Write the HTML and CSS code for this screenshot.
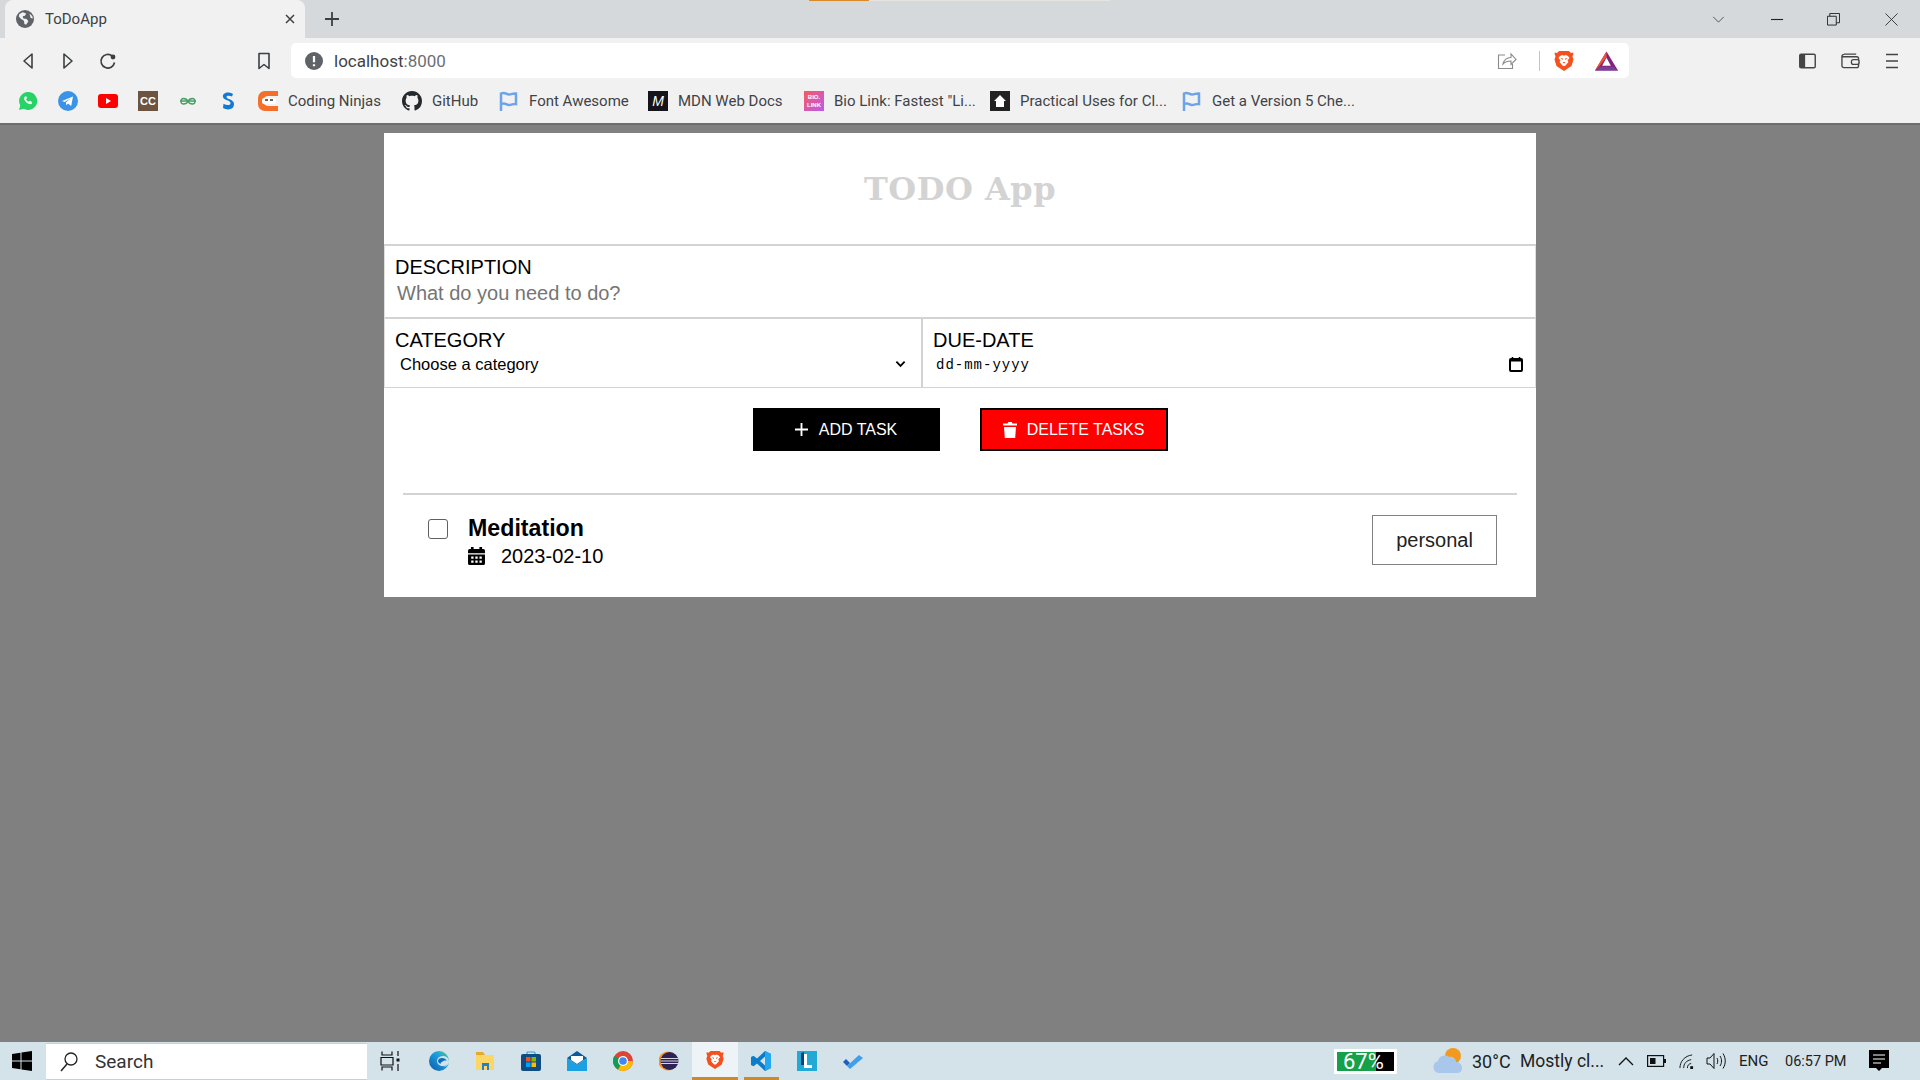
FILE: index.html
```html
<!DOCTYPE html>
<html lang="en">
<head>
<meta charset="utf-8">
<title>ToDoApp</title>
<link rel="stylesheet" href="styles.css">
</head>
<body>
<div class="window">
  <header class="browser">
    <div class="tabstrip">
      <div class="loadbar"><span class="loadbar-done"></span><span class="loadbar-rest"></span></div>
      <div class="tab">
        <svg class="i17" viewBox="0 0 16 16"><circle cx="8" cy="8" r="8" fill="#5f6368"/><path d="M3 3.500l3-1.500 3 1-1 2-2 .5.5 2 3 .5 1.500 2-2 3-1.500-.500-.5-3-3-2-1.500-2zM12 3l2.500 2.500.5 2-2-.5z" fill="#f1f1f1"/></svg>
        <span class="tab-title">ToDoApp</span>
        <svg class="tab-close" viewBox="0 0 10 10"><path d="M1 1l8 8M9 1l-8 8" stroke="#3c4043" stroke-width="1.500" fill="none"/></svg>
      </div>
      <svg class="newtab" viewBox="0 0 14 14"><path d="M7 0v14M0 7h14" stroke="#3c4043" stroke-width="1.800" fill="none"/></svg>
      <div class="winctl">
        <svg class="winctl-down" viewBox="0 0 14 8"><path d="M1 1l6 6 6-6" stroke="#444" stroke-width="1" fill="none"/></svg>
        <svg class="winctl-min" viewBox="0 0 14 14"><path d="M0 7h13" stroke="#222" stroke-width="1.200"/></svg>
        <svg class="winctl-max" viewBox="0 0 14 14"><path d="M.5 3.500h9.500v9.500h-9.500zM3 3.500v-3h10.500v10h-3.500" stroke="#222" stroke-width="1" fill="none"/></svg>
        <svg class="winctl-close" viewBox="0 0 14 14"><path d="M.5 .5l13 13M13.500 .5l-13 13" stroke="#333" stroke-width="1" fill="none"/></svg>
      </div>
    </div>

    <div class="toolbar">
      <svg class="nav" viewBox="0 0 14 18"><path d="M11 2L3 9l8 7z" stroke="#3c4043" stroke-width="1.600" fill="none" stroke-linejoin="round"/></svg>
      <svg class="nav" viewBox="0 0 14 18"><path d="M3 2l8 7-8 7z" stroke="#3c4043" stroke-width="1.600" fill="none" stroke-linejoin="round"/></svg>
      <svg class="nav nav-reload" viewBox="0 0 18 18"><path d="M15.500 10.500a6.800 6.800 0 1 1-2.300-6.500" stroke="#3c4043" stroke-width="1.700" fill="none"/><circle cx="14" cy="5" r="2.400" fill="#3c4043"/></svg>
      <svg class="nav nav-bookmark" viewBox="0 0 14 18"><path d="M2 1.500h10v15l-5-4-5 4z" stroke="#3c4043" stroke-width="1.600" fill="none" stroke-linejoin="round"/></svg>
      <div class="omnibox">
        <svg class="i17" viewBox="0 0 16 16"><circle cx="8" cy="8" r="8" fill="#5f6368"/><path d="M8 3.500v5.500M8 10.800v1.800" stroke="#fff" stroke-width="2"/></svg>
        <span class="url"><span class="url-host">localhost</span>:8000</span>
        <svg class="share" viewBox="0 0 20 18"><path d="M8 3H1.500v13.500h14V12M6 12c1-4 4-6.500 8-6.500V2l5 5.500-5 5V9c-3 0-6 1-8 3z" stroke="#8a8a8a" stroke-width="1.100" fill="none"/></svg>
        <span class="omni-sep"></span>
        <svg class="brave" viewBox="0 0 20 22"><path d="M5 1h10l2 2 2-.5.5 1-1 3 1 3-2 6.500-7.500 5-7.500-5-2-6.500 1-3-1-3 .5-1 2 .5z" fill="#f4511e"/><path d="M6 6l2.500-1 1.500.8 1.500-.8L14 6l1.500 2-2 2.500 1 1.500-3 3.500-1.500.8-1.500-.8-3-3.500 1-1.500-2-2.500z" fill="#fff"/><path d="M6.500 8l2.500.5-.5 1.500zM13.500 8l-2.500.5.5 1.500zM8.500 12h3L10 13.500z" fill="#f4511e"/></svg>
        <svg class="bat" viewBox="0 0 24 20"><path d="M12 0L0 20h24z" fill="#80247b"/><path d="M12 0L0 20l5-5 7-9z" fill="#f4512c"/><path d="M0 20h24l-5-4H5z" fill="#7a3f98"/><path d="M12 6.500L7.500 15h9z" fill="#fff"/></svg>
      </div>
      <svg class="tool tool-side" viewBox="0 0 18 16"><rect x=".8" y=".8" width="16.400" height="14.400" rx="1.500" fill="none" stroke="#444" stroke-width="1.500"/><rect x="1" y="1" width="5.500" height="14" fill="#444"/></svg>
      <svg class="tool tool-wallet" viewBox="0 0 20 16"><path d="M3 .8h13M1 3.500h15.500a2 2 0 0 1 2 2v7.500a2 2 0 0 1-2 2H3a2 2 0 0 1-2-2V3a2 2 0 0 1 2-2" stroke="#444" stroke-width="1.400" fill="none"/><rect x="11" y="6.500" width="8" height="5" rx="2" fill="#f1f1f1" stroke="#444" stroke-width="1.400"/></svg>
      <svg class="tool tool-menu" viewBox="0 0 13 16"><path d="M0 1h13M0 8h13M0 15h13" stroke="#444" stroke-width="1.700"/></svg>
    </div>

    <nav class="bookmarks">
      <svg class="bm" viewBox="0 0 20 20"><path d="M10 1a9 9 0 0 0-7.700 13.500L1 19l4.700-1.200A9 9 0 1 0 10 1z" fill="#25d366"/><path d="M7 5.500c-1.500 1-1 3.500 1 5.500s4.500 3 6 1.500l-.5-2-2-.8-1 1c-1-.5-2-1.500-2.500-2.500l1-1-.7-2z" fill="#fff"/></svg>
      <svg class="bm" viewBox="0 0 20 20"><circle cx="10" cy="10" r="10" fill="#3b93e8"/><path d="M4 10l11-4.500-1.800 9.500-3.200-2.400-1.700 1.700-.4-2.900 4.800-4-6 3.500z" fill="#fff"/></svg>
      <svg class="bm" viewBox="0 0 20 20"><rect y="3" width="20" height="14" rx="3" fill="#f00"/><path d="M8 7l5 3-5 3z" fill="#fff"/></svg>
      <span class="bm bm-cc">CC</span>
      <svg class="bm" viewBox="0 0 20 20"><path d="M2 10h16M10 10.500C9 8 7 7.500 5.500 7.500S3 8.800 3 10.500 4 13 5.500 13 9 12.500 10 10.500zm0 0c1-2.500 3-3 4.500-3S17 8.800 17 10.500 16 13 14.500 13 11 12.500 10 10.500z" stroke="#4a9d64" stroke-width="1.300" fill="none"/></svg>
      <svg class="bm" viewBox="0 0 20 20"><path d="M15 3C11 0 4 1.500 5 6c.7 3.500 8 3 7.500 6.500-.4 2-4 2-7 .3L5 17c4 2.500 11 2 11-4 0-5-7.500-4.500-7.500-7 0-1.500 3-1.500 5.500-.5z" fill="#1379d6"/></svg>
      <a class="bm-item"><svg class="bm" viewBox="0 0 20 20"><path d="M7 0h13v5h-10a5 5 0 0 0 0 10h10v5H7A7 7 0 0 1 0 13V7a7 7 0 0 1 7-7z" fill="#f4702a"/><rect x="4" y="7" width="14" height="6" rx="2" fill="#fff"/><path d="M7 9h3M12 9h3" stroke="#333" stroke-width="1.500"/></svg><span class="bm-text bm-w-cn">Coding Ninjas</span></a>
      <a class="bm-item"><svg class="bm" viewBox="0 0 16 16"><path fill="#24292e" d="M8 0C3.580 0 0 3.580 0 8c0 3.540 2.290 6.530 5.470 7.590.4.070.55-.17.55-.38 0-.19-.01-.82-.01-1.490-2.010.37-2.530-.49-2.690-.94-.09-.23-.48-.94-.82-1.130-.28-.15-.68-.52-.01-.53.63-.01 1.080.58 1.230.82.72 1.210 1.870.87 2.330.66.07-.52.28-.87.51-1.070-1.780-.2-3.640-.89-3.640-3.950 0-.87.31-1.590.82-2.150-.08-.2-.36-1.020.08-2.120 0 0 .67-.21 2.200.82.64-.18 1.320-.27 2-.27.68 0 1.360.09 2 .27 1.530-1.040 2.200-.82 2.200-.82.44 1.100.16 1.920.08 2.120.51.56.82 1.270.82 2.150 0 3.070-1.870 3.750-3.650 3.950.29.25.54.73.54 1.480 0 1.070-.01 1.930-.01 2.200 0 .21.15.46.55.38A8.013 8.013 0 0 0 16 8c0-4.420-3.580-8-8-8z"/></svg><span class="bm-text bm-w-gh">GitHub</span></a>
      <a class="bm-item"><svg class="bm" viewBox="0 0 20 20"><path d="M2 20V2.500c4-2 5 1 8 1s4-1.500 7-1V13c-3-.5-4 1-7 1s-4-3-7-1" stroke="#6da3e8" stroke-width="2.500" fill="none"/></svg><span class="bm-text bm-w-fa">Font Awesome</span></a>
      <a class="bm-item"><span class="bm bm-mdn">M</span><span class="bm-text bm-w-mdn">MDN Web Docs</span></a>
      <a class="bm-item"><span class="bm bm-bio">BIO.<br>LINK</span><span class="bm-text bm-w-bio">Bio Link: Fastest "Li...</span></a>
      <a class="bm-item"><svg class="bm" viewBox="0 0 20 20"><rect width="20" height="20" fill="#222"/><path d="M10 4l6 6h-2v6H6v-6H4z" fill="#fff"/></svg><span class="bm-text bm-w-pu">Practical Uses for Cl...</span></a>
      <a class="bm-item"><svg class="bm" viewBox="0 0 20 20"><path d="M2 20V2.500c4-2 5 1 8 1s4-1.500 7-1V13c-3-.5-4 1-7 1s-4-3-7-1" stroke="#6da3e8" stroke-width="2.500" fill="none"/></svg><span class="bm-text">Get a Version 5 Che...</span></a>
    </nav>
  </header>

  <main class="page">
    <section class="card">
      <h1 class="app-title">TODO App</h1>
      <div class="field field-full">
        <label class="field-label" for="desc">DESCRIPTION</label>
        <input class="desc-input" id="desc" type="text" placeholder="What do you need to do?">
      </div>
      <div class="field-row">
        <div class="field field-cat">
          <label class="field-label" for="cat">CATEGORY</label>
          <div class="select-wrap">
            <select class="cat-select" id="cat"><option>Choose a category</option></select>
            <svg class="chevron" viewBox="0 0 12 8"><path d="M1.500 1.500L6 6l4.500-4.500" stroke="#000" stroke-width="2" fill="none"/></svg>
          </div>
        </div>
        <div class="field field-date">
          <span class="field-label">DUE-DATE</span>
          <div class="date-wrap">
            <span class="date-text">dd-mm-yyyy</span>
            <svg class="date-icon" viewBox="0 0 14 15"><path d="M3.500 0v2M10.500 0v2" stroke="#000" stroke-width="1.500"/><rect x="1" y="2" width="12" height="12" rx="1" fill="none" stroke="#000" stroke-width="2"/><rect x="1" y="2" width="12" height="2.500" fill="#000"/></svg>
          </div>
        </div>
      </div>
      <div class="actions">
        <button class="btn btn-add" type="button"><svg class="btn-plus" viewBox="0 0 14 14"><path d="M7 0v14M0 7h14" stroke="#fff" stroke-width="2"/></svg>ADD TASK</button>
        <button class="btn btn-del" type="button"><svg class="btn-trash" viewBox="0 0 14 16"><path d="M4.500 1.500L5.300 0h3.400l.8 1.500H14v2H0v-2zM1 5h12l-.8 11H1.800z" fill="#fff"/></svg>DELETE TASKS</button>
      </div>
      <hr class="rule">
      <div class="task">
        <input class="task-check" type="checkbox">
        <div class="task-body">
          <div class="task-name">Meditation</div>
          <div class="task-date">
            <svg class="task-cal" viewBox="0 0 16 17"><path d="M4 0v3M12 0v3" stroke="#000" stroke-width="2.500"/><path d="M0 3.500a1.500 1.500 0 0 1 1.500-1.500h13a1.500 1.500 0 0 1 1.500 1.500V6H0zM0 7h16v8.500a1.500 1.500 0 0 1-1.500 1.500h-13A1.500 1.500 0 0 1 0 15.500z" fill="#000"/><path d="M3 9h2.200v2H3zM6.900 9h2.200v2H6.900zM10.800 9H13v2h-2.200zM3 12.800h2.200v2H3zM6.900 12.800h2.200v2H6.900zM10.800 12.800H13v2h-2.200z" fill="#fff"/></svg>
            <span>2023-02-10</span>
          </div>
        </div>
        <span class="task-tag">personal</span>
      </div>
    </section>
  </main>

  <footer class="taskbar">
    <div class="start"><svg class="start-logo" viewBox="0 0 20 20"><path d="M0 3l8.500-1.300V9.500H0zM9.500 1.500L20 0v9.500H9.500zM0 10.500h8.500v7.800L0 17zM9.500 10.500H20V20L9.500 18.500z" fill="#000"/></svg></div>
    <div class="search">
      <svg class="search-icon" viewBox="0 0 18 20"><circle cx="11" cy="7" r="6" fill="none" stroke="#222" stroke-width="1.300"/><path d="M7 12l-6 7" stroke="#222" stroke-width="1.500"/></svg>
      <span class="search-text">Search</span>
    </div>
    <div class="slot slot-view"><svg class="slot-icon" viewBox="0 0 20 20"><path d="M2 .5v3.500h10V.5M1 6.500h12v7.500H1zM2 19.500V16h10v3.500M18 0v5M18 13v7" stroke="#111" stroke-width="1.200" fill="none"/><rect x="16.500" y="7.500" width="3" height="3" fill="#111"/></svg></div>
    <div class="slot"><svg class="slot-icon" viewBox="0 0 20 20"><defs><linearGradient id="edge" x1="0" y1="1" x2="1" y2="0"><stop offset="0" stop-color="#0c59a4"/><stop offset=".6" stop-color="#1b9de2"/><stop offset="1" stop-color="#4fd27a"/></linearGradient></defs><circle cx="10" cy="10" r="10" fill="url(#edge)"/><path d="M20 11c0-4-3-6-6-6-4 0-6 3-6 5 0 3 3 5 6 5 1 0 3-.5 4-1.500-.5 1-3 3-5 2.500 3 .5 7-2 7-5z" fill="#d3e2ea"/><path d="M9 10c0-2 2-3 4-3 2.500 0 4 1 5 3-2-1-4 0-5 1-1 0-2 1-1 2-1.500-.5-3-1.500-3-3z" fill="#0f6cbd"/></svg></div>
    <div class="slot"><svg class="slot-icon" viewBox="0 0 20 20"><path d="M1 1h7l2 3H1z" fill="#e5a92d"/><path d="M1 4h18v15H1z" fill="#fcd768"/><path d="M7 19v-7h7v7h-2v-4H9v4z" fill="#2280c9"/></svg></div>
    <div class="slot"><svg class="slot-icon" viewBox="0 0 20 20"><path d="M6 5V2a1 1 0 0 1 1-1h6a1 1 0 0 1 1 1v3" stroke="#2a9fd6" stroke-width="1.200" fill="none"/><rect y="3" width="20" height="17" rx="2" fill="#0f4c81"/><rect x="5" y="6" width="4.500" height="4.500" fill="#f25022"/><rect x="10.500" y="6" width="4.500" height="4.500" fill="#7fba00"/><rect x="5" y="11.500" width="4.500" height="4.500" fill="#00a4ef"/><rect x="10.500" y="11.500" width="4.500" height="4.500" fill="#ffb900"/></svg></div>
    <div class="slot"><svg class="slot-icon" viewBox="0 0 20 20"><path d="M0 7l10-7 10 7-10 7z" fill="#0a5a9c"/><path d="M0 7v13h20V7l-10 7z" fill="#1ba1e2"/><path d="M4 5h12v4l-6 4-6-4z" fill="#fff"/></svg></div>
    <div class="slot"><svg class="slot-icon" viewBox="0 0 20 20"><circle cx="10" cy="10" r="10" fill="#db4437"/><path d="M10 10L1.300 5A10 10 0 0 0 5 18.700l5-8.700z" fill="#0f9d58"/><path d="M10 10l-5 8.700A10 10 0 0 0 19.900 10z" fill="#fbbc05"/><circle cx="10" cy="10" r="5" fill="#fff"/><circle cx="10" cy="10" r="3.800" fill="#4285f4"/></svg></div>
    <div class="slot"><svg class="slot-icon" viewBox="0 0 20 20"><circle cx="9" cy="10" r="9.500" fill="#f7941e"/><circle cx="10.500" cy="10" r="9" fill="#2c2255"/><path d="M2 7.500h17M1.500 10h18M2 12.500h17" stroke="#d5d5e0" stroke-width="1.200"/></svg></div>
    <div class="slot slot-active"><svg class="slot-icon" viewBox="0 0 20 22"><path d="M5 1h10l2 2 2-.5.5 1-1 3 1 3-2 6.500-7.500 5-7.500-5-2-6.500 1-3-1-3 .5-1 2 .5z" fill="#f4511e"/><path d="M6 6l2.500-1 1.500.8 1.500-.8L14 6l1.500 2-2 2.500 1 1.500-3 3.500-1.500.8-1.500-.8-3-3.500 1-1.500-2-2.500z" fill="#fff"/><path d="M6.500 8l2.500.5-.5 1.500zM13.500 8l-2.500.5.5 1.500zM8.500 12h3L10 13.500z" fill="#f4511e"/></svg></div>
    <div class="slot slot-open"><svg class="slot-icon" viewBox="0 0 20 20"><path d="M14 0l6 3v14l-6 3-8-7.500-3.500 2.800L0 14V6l2.500-1.300L6 7.500zM14 5.500L9 10l5 4.500z" fill="#0a7cc9"/><path d="M14 0l6 3v14l-6 3z" fill="#22a7f0"/></svg></div>
    <div class="slot"><svg class="slot-icon" viewBox="0 0 20 20"><rect width="20" height="20" fill="#22a9d6"/><path d="M4 2l3-1v13h-3z" fill="#0c3f7a"/><path d="M7 3h3v11h5v3H7z" fill="#fff"/></svg></div>
    <div class="slot"><svg class="slot-icon" viewBox="0 0 20 20"><path d="M0 11l3-3 4 4-3 3z" fill="#1f5fc4"/><path d="M4 15L16 4l4 3L7 18z" fill="#3f9fea"/></svg></div>

    <div class="tray">
      <div class="meter"><span class="meter-fill">67%</span><span class="meter-rest"></span></div>
      <svg class="cloud" viewBox="0 0 30 28"><circle cx="20" cy="9" r="8" fill="#f29a1f"/><path d="M6 26a6 6 0 0 1-1-11.800C6 9 12 7 16 10c3-1 7 1 7 5 4 0 6 3 6 6s-2 5-5 5z" fill="#a8c7ea"/></svg>
      <span class="tray-temp">30°C</span>
      <span class="tray-weather">Mostly cl...</span>
      <svg class="tray-up" viewBox="0 0 16 9"><path d="M1 8l7-7 7 7" stroke="#111" stroke-width="1.300" fill="none"/></svg>
      <svg class="tray-batt" viewBox="0 0 19 12"><rect x=".6" y=".6" width="16" height="10.800" fill="none" stroke="#111" stroke-width="1.200"/><rect x="3" y="3" width="5.500" height="6" fill="#111"/><rect x="17" y="4" width="2" height="4" fill="#111"/></svg>
      <svg class="tray-wifi" viewBox="0 0 16 16"><path d="M1 15C1 8 6 2 14 1M5 15c0-5 3-8 8-9M9 15c0-3 1-4 4-5" stroke="#111" stroke-width="1" fill="none"/><rect x="12" y="13" width="3" height="3" fill="#111"/></svg>
      <svg class="tray-vol" viewBox="0 0 20 18"><path d="M1 6h3l4-4.500v15L4 12H1z" stroke="#111" stroke-width="1" fill="none"/><path d="M11 6c1 2 1 4 0 6M14 4c2 3 2 7 0 10M17 1.500c3 5 3 10 0 15" stroke="#111" stroke-width="1" fill="none"/></svg>
      <span class="tray-lang">ENG</span>
      <span class="tray-time">06:57 PM</span>
      <svg class="tray-note" viewBox="0 0 20 22"><path d="M0 0h20v18h-7l-3 3-3-3H0z" fill="#000"/><path d="M4 5h12M4 9h12M4 13h8" stroke="#fff" stroke-width="1.200"/></svg>
    </div>
  </footer>
</div>
</body>
</html>
```

FILE: styles.css
```css
* { box-sizing: border-box; }

html, body { margin: 0; height: 100%; }

body { font-family: "Liberation Sans", Arial, sans-serif; background: #808080; overflow: hidden; }

.window { display: flex; flex-direction: column; height: 1080px; }

svg { display: block; flex: none; }

/* browser chrome */
.browser { font-family: Roboto, "Open Sans", sans-serif; color: #3c4043; background: #f1f1f1; border-bottom: 2px solid #6e6e6e; height: 125px; flex: none; }

.tabstrip { position: relative; display: flex; align-items: flex-end; height: 38px; background: #d5d9dc; padding-left: 5px; }

.loadbar { position: absolute; top: 0; left: 809px; display: flex; height: 1px; }
.loadbar-done { width: 60px; background: #d98a2b; }
.loadbar-rest { width: 241px; background: #e6e4df; }

.tab { display: flex; align-items: center; width: 300px; height: 38px; padding-left: 11px; background: #f1f1f1; border-radius: 8px 8px 0 0; }
.i17 { width: 18px; height: 18px; }
.tab-title { margin-left: 11px; font-size: 15px; color: #3c3f44; flex: 1; }
.tab-close { width: 10px; height: 10px; margin-right: 10px; }

.newtab { width: 14px; height: 14px; margin: 0 0 12px 20px; }

.winctl { display: flex; align-items: center; margin-left: auto; height: 38px; }
.winctl-down { width: 13px; height: 7px; margin-right: 46px; }
.winctl-min { width: 13px; height: 13px; margin-right: 43px; }
.winctl-max { width: 13px; height: 13px; margin-right: 45px; }
.winctl-close { width: 13px; height: 13px; margin-right: 22px; }

.toolbar { display: flex; align-items: center; height: 40px; padding: 5px 0 0 21px; }
.nav { width: 14px; height: 18px; margin-right: 26px; }
.nav-reload { width: 18px; margin: 0 24px 0 -2px; }
.nav-bookmark { margin: 0 20px 0 116px; }

.omnibox { display: flex; align-items: center; width: 1338px; height: 35px; padding: 0 11px 0 14px; background: #fff; border-radius: 5px; }
.url { margin-left: 11px; font-size: 17px; color: #6b6f73; flex: 1; }
.url-host { color: #3f4245; }
.share { width: 20px; height: 18px; }
.omni-sep { width: 1px; height: 20px; margin: 0 14px 0 22px; background: #c4c4c4; }
.brave { width: 20px; height: 22px; margin-right: 21px; }
.bat { width: 23px; height: 20px; }

.tool { height: 16px; }
.tool-side { width: 17px; margin-left: 170px; }
.tool-wallet { width: 19px; margin-left: 25px; }
.tool-menu { width: 12px; margin-left: 26px; }

.bookmarks { display: flex; align-items: center; gap: 21px; height: 45px; padding-left: 18px; }
.bookmarks > .bm { margin-right: -1px; }
.bm { width: 20px; height: 20px; flex: none; }
.bm-item { display: flex; align-items: center; gap: 10px; }
.bm-text { font-size: 15px; white-space: nowrap; color: #3f4347; }
.bm-w-cn { width: 93px; }
.bm-w-gh { width: 46px; }
.bm-w-fa { width: 98px; }
.bm-w-mdn { width: 105px; }
.bm-w-bio { width: 135px; }
.bm-w-pu { width: 141px; }

.bm-cc { display: flex; align-items: center; justify-content: center; background: #6d5441; color: #fff; font: bold 11px "Liberation Sans", sans-serif; }
.bm-mdn { display: flex; align-items: center; justify-content: center; background: #15141a; color: #fff; font: italic 14px "Liberation Sans", sans-serif; }
.bm-bio { display: flex; align-items: center; justify-content: center; text-align: center; background: linear-gradient(135deg, #f8595f, #b95cf0); color: #fff; font: bold 6px/8px "Liberation Sans", sans-serif; }

/* app */
.page { flex: 1; background: #808080; padding-top: 8px; }

.card { width: 1152px; margin: 0 auto; background: #fff; }

.app-title { margin: 0; height: 113px; display: flex; align-items: center; justify-content: center; border-bottom: 2px solid #d3d3d3; font: bold 32px "DejaVu Serif", "Liberation Mono", monospace; letter-spacing: .5px; color: #d3d3d3; }

.field { padding: 10px 10px 0; }
.field-label { display: block; font-size: 20px; line-height: 23px; color: #000; }

.field-full { height: 73px; border-left: 1px solid #dedede; border-right: 1px solid #dedede; border-bottom: 2px solid #d3d3d3; }
.desc-input { display: block; width: 100%; height: 24px; margin: 2px 0 0 2px; padding: 0; border: 0; outline: 0; font: 20px "Liberation Sans", Arial, sans-serif; }
.desc-input::placeholder { color: #757575; }

.field-row { display: flex; height: 69px; border-left: 1px solid #dedede; border-right: 1px solid #dedede; border-bottom: 1px solid #d3d3d3; }
.field-cat { width: 538px; border-right: 2px solid #d3d3d3; }
.field-date { flex: 1; padding-left: 10px; }

.select-wrap { display: flex; align-items: center; height: 24px; }
.cat-select { flex: 1; min-width: 0; height: 24px; padding: 0 0 0 5px; margin-right: -1px; border: 0; outline: 0; background: transparent; appearance: none; font: 16.500px "Liberation Sans", Arial, sans-serif; color: #000; }
.chevron { width: 11px; height: 8px; margin: 0 5px 0 -16px; }

.date-wrap { display: flex; align-items: center; height: 24px; padding: 0 2px 0 3px; }
.date-text { flex: 1; padding-top: 2px; font: 14px "Liberation Mono", monospace; letter-spacing: 1px; }
.date-icon { width: 14px; height: 15px; }

.actions { display: flex; justify-content: center; gap: 40px; padding: 20px 0 42px; }
.btn { display: flex; align-items: center; justify-content: center; height: 43px; padding: 0; font: 16px "Liberation Sans", Arial, sans-serif; color: #fff; border: 2px solid #000; }
.btn-add { width: 187px; background: #000; }
.btn-del { width: 188px; background: #f00; }
.btn-plus { width: 13px; height: 13px; margin-right: 11px; }
.btn-trash { width: 14px; height: 16px; margin-right: 10px; }

.rule { height: 2px; margin: 0 19px; border: 0; background: #d3d3d3; }

.task { display: flex; padding: 20px 39px 29px 44px; }
.task-check { appearance: none; width: 20px; height: 20px; margin: 4px 20px 0 0; background: #fff; border: 1.500px solid #606060; border-radius: 3px; }
.task-body { flex: 1; }
.task-name { font-size: 23.200px; font-weight: bold; line-height: 26px; color: #000; }
.task-date { display: flex; align-items: center; gap: 16px; margin-top: 3px; font-size: 20px; line-height: 24px; color: #000; }
.task-cal { width: 17px; height: 18px; }
.task-tag { display: flex; align-items: center; justify-content: center; width: 125px; height: 50px; border: 1px solid #808080; font-size: 20px; color: #222; }

/* taskbar */
.taskbar { display: flex; align-items: stretch; height: 38px; flex: none; background: #d4e2ea; font-family: Roboto, "Open Sans", sans-serif; color: #222; }

.start { display: flex; align-items: center; width: 46px; padding-left: 12px; }
.start-logo { width: 20px; height: 20px; }

.search { display: flex; align-items: center; width: 321px; background: #fff; padding-left: 14px; margin-top: 1px; border-top: 1px solid #c8d0d4; border-bottom: 1px solid #c8d0d4; }
.search-icon { width: 18px; height: 20px; }
.search-text { margin-left: 17px; font-size: 19px; color: #333; }

.slot { display: flex; align-items: center; justify-content: center; width: 46px; }
.slot-view { margin-right: 3px; }
.slot-icon { width: 20px; height: 20px; }
.slot-active { background: #edf3f6; border-bottom: 3px solid #cc8a2e; }
.slot-open { position: relative; }
.slot-open::after { content: ""; position: absolute; left: 6px; right: 5px; bottom: 0; height: 3px; background: #cc8a2e; }

.tray { display: flex; align-items: center; margin-left: auto; padding-right: 31px; }

.meter { display: flex; width: 63px; height: 25px; border: 3px solid #fff; margin-right: 35px; background: #000; }
.meter-fill { width: 39px; background: #16a04a; color: #fff; font-size: 22px; line-height: 19px; white-space: nowrap; padding-left: 6px; }
.meter-rest { flex: 1; }

.cloud { width: 32px; height: 28px; margin-right: 8px; }
.tray-temp { width: 48px; font-size: 18px; white-space: nowrap; }
.tray-weather { width: 98px; font-size: 17.500px; white-space: nowrap; }
.tray-up { width: 16px; height: 9px; margin-right: 13px; }
.tray-batt { width: 19px; height: 12px; margin-right: 13px; }
.tray-wifi { width: 15px; height: 15px; margin-right: 12px; }
.tray-vol { width: 20px; height: 18px; margin-right: 13px; }
.tray-lang { width: 46px; font-size: 15px; }
.tray-time { width: 84px; font-size: 14.500px; white-space: nowrap; }
.tray-note { width: 20px; height: 22px; }
```
